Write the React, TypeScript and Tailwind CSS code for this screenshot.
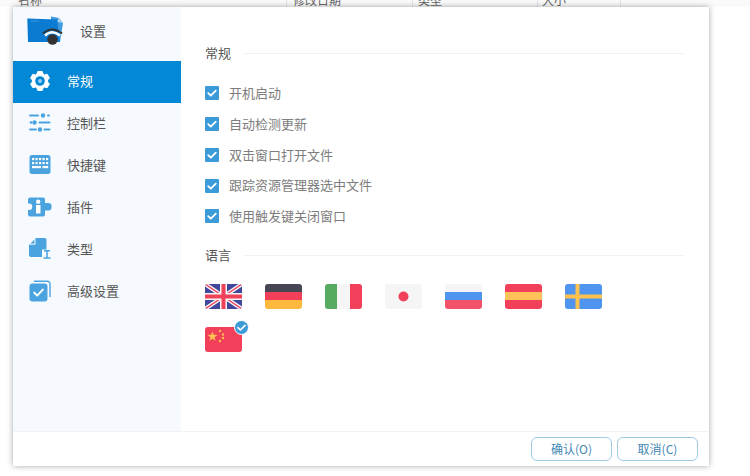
import { ReactNode } from "react";

const font = "font-['Noto_Sans_CJK_SC','Noto_Sans',sans-serif]";

const GearIcon = ({ color, hole }: { color: string; hole: string }) => (
  <svg width="22" height="22" viewBox="0 0 22 22">
    <path
      fill={color}
      stroke={color}
      strokeWidth="1"
      strokeLinejoin="round"
      d="M8.800 1.500h4.400l.8 2.500 1.600.9 2.600-.6 2.200 3.800-1.800 1.900 0 2 1.800 1.900-2.200 3.800-2.600-.6-1.600.9-.8 2.500H8.800l-.8-2.500-1.600-.9-2.600.6-2.200-3.800 1.800-1.900 0-2-1.800-1.900 2.200-3.800 2.600.6 1.600-.9z"
    />
    <circle cx="11" cy="11" r="4.800" fill={hole} />
    <circle cx="11" cy="11" r="2" fill={color} opacity="0.6" />
  </svg>
);

const SlidersIcon = () => (
  <svg width="22" height="19" viewBox="0 0 22 19" fill="#4aa3df">
    <rect x="0" y="1.500" width="10" height="2" rx="1" />
    <circle cx="14" cy="2.500" r="2.200" />
    <rect x="18" y="1.500" width="3" height="2" rx="1" />
    <circle cx="2" cy="9.500" r="1.300" />
    <circle cx="5.500" cy="9.500" r="2.200" />
    <rect x="9.500" y="8.500" width="12" height="2" rx="1" />
    <rect x="0" y="15.500" width="8" height="2" rx="1" />
    <circle cx="11" cy="16.500" r="2.200" />
    <rect x="14.500" y="15.500" width="7" height="2" rx="1" />
  </svg>
);

const KeyboardIcon = () => (
  <svg width="22" height="19" viewBox="0 0 22 19">
    <rect x="0.500" y="0" width="21" height="19" rx="2.500" fill="#4aa3df" />
    <g fill="#fff">
      <rect x="3" y="3" width="2.200" height="2.200" />
      <rect x="6.500" y="3" width="2.200" height="2.200" />
      <rect x="10" y="3" width="2.200" height="2.200" />
      <rect x="13.500" y="3" width="2.200" height="2.200" />
      <rect x="17" y="3" width="2.200" height="2.200" />
      <rect x="3" y="7" width="2.200" height="2.200" />
      <rect x="6.500" y="7" width="2.200" height="2.200" />
      <rect x="10" y="7" width="2.200" height="2.200" />
      <rect x="13.500" y="7" width="2.200" height="2.200" />
      <rect x="17" y="7" width="2.200" height="2.200" />
      <rect x="3" y="11" width="9" height="2.200" />
      <rect x="13.500" y="11" width="5.700" height="2.200" />
    </g>
  </svg>
);

const PluginIcon = () => (
  <svg width="24" height="20" viewBox="0 0 24 20">
    <path
      fill="#4aa3df"
      d="M2 0.500h13a2 2 0 0 1 2 2V6h3.500a3 3 0 0 1 3 3v1.500a3 3 0 0 1-3 3H17v4a2 2 0 0 1-2 2H2a2 2 0 0 1-2-2v-4.500h1a3.200 3.200 0 0 0 0-6.500H0V2.500a2 2 0 0 1 2-2z"
    />
    <rect x="8" y="8" width="4.500" height="8.500" fill="#fff" />
    <circle cx="10.200" cy="4.800" r="2.200" fill="#fff" />
  </svg>
);

const FileTypeIcon = () => (
  <svg width="22" height="21" viewBox="0 0 22 21">
    <path
      fill="#4aa3df"
      d="M7 0H15.500a2 2 0 0 1 2 2V11.500H13V19H2a2 2 0 0 1-2-2V7z"
    />
    <path d="M6 1V6.200H1" fill="none" stroke="#fff" strokeWidth="1" />
    <path
      stroke="#4aa3df"
      strokeWidth="1.500"
      fill="none"
      d="M15 12.800h6M18 12.800v7.200M14.500 20h7"
    />
  </svg>
);

const AdvancedIcon = () => (
  <svg width="22" height="22" viewBox="0 0 22 22">
    <path
      d="M5 1.200h13.500a2.500 2.500 0 0 1 2.500 2.500V17"
      fill="none"
      stroke="#4aa3df"
      strokeWidth="1.400"
    />
    <rect x="0.500" y="3.500" width="18" height="18" rx="3" fill="#4aa3df" />
    <path
      d="M5.200 12.600l3 3 5.600-6"
      fill="none"
      stroke="#fff"
      strokeWidth="2"
      strokeLinecap="round"
      strokeLinejoin="round"
    />
  </svg>
);

const AppLogo = () => (
  <svg width="37" height="30" viewBox="0 0 37 30">
    <path fill="#3f9be0" d="M24 0.500l8 1.500 4 5-3 19H24z" />
    <path fill="#a9d4f2" d="M31.500 2l4.500 5-5.500-1z" />
    <path fill="#0a7bd0" d="M0.300 2.500L30 3.500 33 26 1 26z" />
    <path fill="#3f9be0" d="M4 4.500h8v1H4z" />
    <path d="M18 19.500Q25 13 33 19.500" fill="none" stroke="#fff" strokeWidth="2.500" />
    <path d="M16 17.500Q25 9.500 35 17.500" fill="none" stroke="#333" strokeWidth="2" />
    <circle cx="25.500" cy="23.500" r="5.200" fill="#333" />
  </svg>
);

const Check = ({ size }: { size: number }) => (
  <svg width={size} height={size} viewBox="0 0 14 14">
    <path
      d="M3.200 7.200l2.600 2.500 5-5"
      fill="none"
      stroke="#fff"
      strokeWidth="1.800"
      strokeLinecap="round"
      strokeLinejoin="round"
    />
  </svg>
);

const Stripes = ({ children }: { children: ReactNode }) => (
  <div className="w-[37px] h-[25px] rounded-[3px] overflow-hidden">{children}</div>
);

const FlagSvg = ({ children }: { children: ReactNode }) => (
  <Stripes>
    <svg width="37" height="25" viewBox="0 0 37 25" className="block">
      {children}
    </svg>
  </Stripes>
);

const flags: ReactNode[] = [
  <FlagSvg key="gb">
    <rect width="37" height="25" fill="#41479b" />
    <path d="M0 0L37 25M37 0L0 25" stroke="#f5f5f5" strokeWidth="4" />
    <path d="M0 0L37 25M37 0L0 25" stroke="#f0405a" strokeWidth="1.400" />
    <path d="M18.500 0V25M0 12.500H37" stroke="#f5f5f5" strokeWidth="7" />
    <path d="M18.500 0V25M0 12.500H37" stroke="#f0405a" strokeWidth="4" />
  </FlagSvg>,
  <Stripes key="de">
    <div className="h-[8px] bg-[#464655]" />
    <div className="h-[8px] bg-[#f2405a]" />
    <div className="h-[9px] bg-[#ffb93f]" />
  </Stripes>,
  <Stripes key="it">
    <div className="flex h-full">
      <div className="w-[12px] bg-[#57ab61]" />
      <div className="w-[13px] bg-[#f5f5f5]" />
      <div className="w-[12px] bg-[#f2405a]" />
    </div>
  </Stripes>,
  <FlagSvg key="jp">
    <rect width="37" height="25" fill="#f5f5f5" />
    <circle cx="18.500" cy="12.500" r="5" fill="#f2405a" />
  </FlagSvg>,
  <Stripes key="ru">
    <div className="h-[8px] bg-[#f5f5f5]" />
    <div className="h-[8px] bg-[#4f94ef]" />
    <div className="h-[9px] bg-[#f2536b]" />
  </Stripes>,
  <Stripes key="es">
    <div className="h-[8px] bg-[#f2405a]" />
    <div className="h-[8px] bg-[#ffc15a]" />
    <div className="h-[9px] bg-[#f2405a]" />
  </Stripes>,
  <FlagSvg key="se">
    <rect width="37" height="25" fill="#4f94ef" />
    <path d="M12.500 0V25M0 12.500H37" stroke="#ffc14f" strokeWidth="4" />
  </FlagSvg>,
  <div key="cn" className="relative">
    <FlagSvg>
      <rect width="37" height="25" fill="#f2405a" />
      <path
        fill="#ffc14f"
        d="M7.500 4.500l1.300 3.300 3.600.2-2.800 2.300.9 3.400-3-1.900-3 1.900.9-3.400-2.800-2.300 3.600-.2z"
      />
      <circle cx="15" cy="4" r="1.200" fill="#ffc14f" />
      <circle cx="18" cy="7.500" r="1.200" fill="#ffc14f" />
      <circle cx="18" cy="11" r="1.200" fill="#ffc14f" />
      <circle cx="15" cy="14" r="1.200" fill="#ffc14f" />
    </FlagSvg>
    <div className="absolute -right-[7px] -top-[7px] flex h-[15px] w-[15px] items-center justify-center rounded-full bg-[#3b9bd9] border border-white">
      <Check size={13} />
    </div>
  </div>,
];

const navItems = [
  { label: "常规", icon: <GearIcon color="#fff" hole="#0288d6" />, active: true },
  { label: "控制栏", icon: <SlidersIcon /> },
  { label: "快捷键", icon: <KeyboardIcon /> },
  { label: "插件", icon: <PluginIcon /> },
  { label: "类型", icon: <FileTypeIcon /> },
  { label: "高级设置", icon: <AdvancedIcon /> },
];

const options = ["开机启动", "自动检测更新", "双击窗口打开文件", "跟踪资源管理器选中文件", "使用触发键关闭窗口"];

const SectionTitle = ({ title }: { title: string }) => (
  <div className="flex items-center gap-[12px] pr-[24px]">
    <span className="mb-[1px] text-[13px] leading-[18px] text-[#555]">{title}</span>
    <div className="h-px flex-1 bg-[#f0f2f4]" />
  </div>
);

const App = () => {
  return (
    <div className={`relative h-[476px] w-[750px] overflow-hidden bg-white ${font}`}>
      {/* table header behind the dialog */}
      <div className="absolute left-0 top-[-8px] flex h-[15px] w-full bg-[#fafafa] text-[12px] leading-[15px] text-[#666]">
        <span className="ml-[18px] w-[268px]">名称</span>
        <span className="w-[126px] border-l border-[#e4e4e4] pl-[6px]">修改日期</span>
        <span className="w-[125px] border-l border-[#e4e4e4] pl-[5px]">类型</span>
        <span className="w-[83px] border-l border-[#e4e4e4] pl-[4px]">大小</span>
        <span className="border-l border-[#e4e4e4]" />
      </div>

      {/* dialog */}
      <div className="absolute left-[13px] top-[7px] flex h-[459px] w-[696px] flex-col bg-white shadow-[0_0_6px_rgba(0,0,0,0.35)]">
        <div className="flex min-h-0 flex-1">
          {/* SIDEBAR */}
          <div className="w-[168px] bg-[#f6fafe]">
            <div className="flex h-[54px] items-center pb-[6px] pl-[14px]">
              <AppLogo />
              <span className="ml-[16px] text-[13px] text-[#555]">设置</span>
            </div>
            {navItems.map((item) => (
              <div
                key={item.label}
                className={`flex h-[42px] items-center ${item.active ? "bg-[#0288d6] text-white" : "text-[#555]"}`}
              >
                <div className="mb-[3px] flex w-[54px] justify-center">{item.icon}</div>
                <span className="mb-[2px] text-[13px]">{item.label}</span>
              </div>
            ))}
          </div>

          {/* CONTENT */}
          <div className="flex-1 pl-[24px] pt-[37px]">
            <SectionTitle title="常规" />
            <div className="mt-[15px] flex flex-col">
              {options.map((option) => (
                <div key={option} className="flex h-[30.750px] items-center gap-[10px]">
                  <div className="flex h-[14px] w-[14px] items-center justify-center rounded-[1px] bg-[#3b9bd9]">
                    <Check size={14} />
                  </div>
                  <span className="mb-[1px] text-[13px] text-[#7d7d7d]">{option}</span>
                </div>
              ))}
            </div>
            <div className="mt-[14px]">
              <SectionTitle title="语言" />
            </div>
            <div className="mt-[19px] flex w-[420px] flex-wrap gap-x-[23px] gap-y-[18px]">{flags}</div>
          </div>
        </div>

        {/* FOOTER */}
        <div className="flex h-[35px] items-center justify-end gap-[5px] border-t border-[#f0f2f4] pr-[11px]">
          <button className="h-[24px] w-[81px] rounded-[6px] border border-[#9ecbe6] bg-white text-[12px] text-[#3f87b5]">
            确认(O)
          </button>
          <button className="h-[24px] w-[81px] rounded-[6px] border border-[#9ecbe6] bg-white text-[12px] text-[#3f87b5]">
            取消(C)
          </button>
        </div>
      </div>
    </div>
  );
};

export default App;
